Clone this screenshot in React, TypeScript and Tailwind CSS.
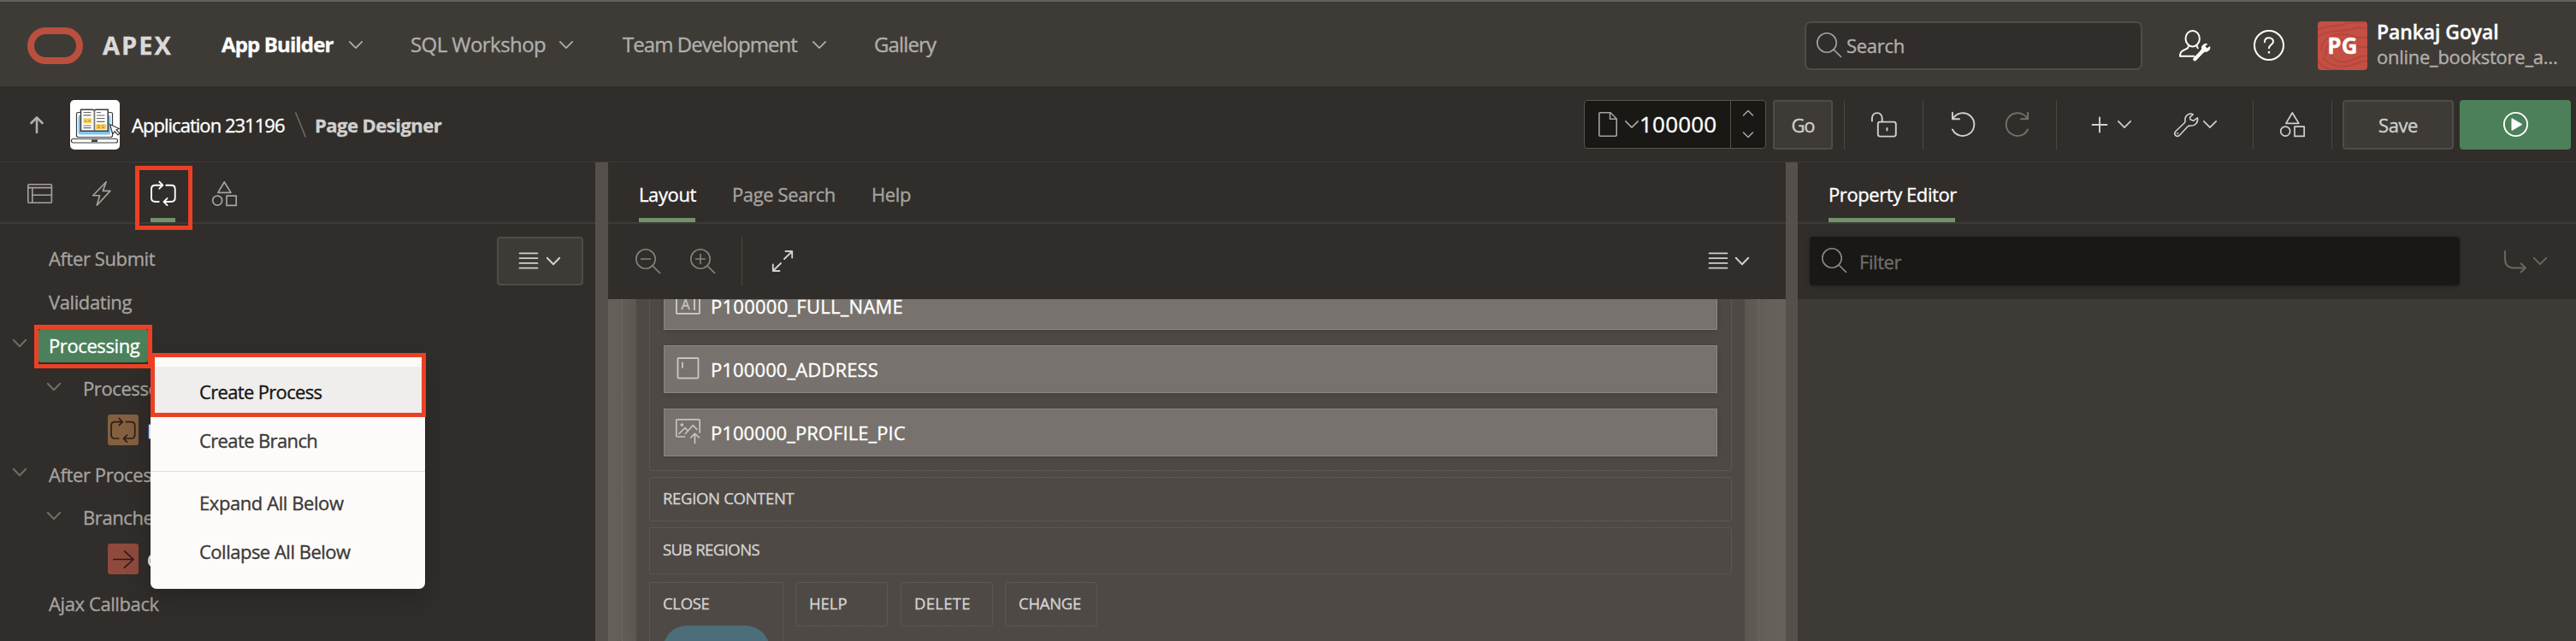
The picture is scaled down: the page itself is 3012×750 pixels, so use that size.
import React from "react";

type SvgProps = { className?: string; w: number; h: number; sw?: number; children: React.ReactNode };

function Svg({ className = "", w, h, sw = 1.6, children }: SvgProps) {
  return (
    <svg
      className={`block shrink-0 overflow-visible ${className}`}
      width={w}
      height={h}
      viewBox={`0 0 ${w} ${h}`}
      fill="none"
      stroke="currentColor"
      strokeWidth={sw}
      strokeLinecap="round"
      strokeLinejoin="round"
    >
      {children}
    </svg>
  );
}

const Chevron = ({ className = "", sw = 1.7 }: { className?: string; sw?: number }) => (
  <Svg w={16} h={9} sw={sw} className={className}>
    <path d="M.8 .8 8 8.2 15.2 .8" />
  </Svg>
);

const Lens = ({ className = "", sign = "" }: { className?: string; sign?: string }) => (
  <Svg w={29} h={29} className={className}>
    <circle cx="12" cy="12" r="11.2" />
    <path d="M20 20 28.5 28.4" />
    {sign !== "" && <path d="M6.5 12h11" />}
    {sign === "+" && <path d="M12 6.5v11" />}
  </Svg>
);

const Lines = () => (
  <Svg w={22} h={20} sw={1.7}>
    <path d="M.5 1.3h21M.5 7.1h21M.5 12.9h21M.5 18.7h21" />
  </Svg>
);

const Cycle = ({ className = "", sw = 1.9 }: { className?: string; sw?: number }) => (
  <Svg w={30} h={29} sw={sw} className={className}>
    <path d="M9.7 24H5.5Q1 24 1 19.5V9.2Q1 4.7 5.5 4.7H14.3M10.3.7l4 4-4 4" />
    <path d="M18.3 4.7h5.9q4.5 0 4.5 4.5v10.3q0 4.5-4.5 4.5H15.7M19.5 20.1l-4 4 4 4" />
  </Svg>
);

const Shapes = ({ className = "" }: { className?: string }) => (
  <Svg w={29} h={29} className={className} sw={1.7}>
    <path d="M14.3 1 21.9 13.4H6.9Z" />
    <circle cx="6.2" cy="22.6" r="5.5" />
    <rect x="17" y="17.2" width="11.2" height="11.2" />
  </Svg>
);

const Sep = ({ className = "" }: { className?: string }) => (
  <div className={`h-[58px] w-px shrink-0 bg-[#4a4642] ${className}`} />
);

function Header() {
  return (
    <header className="flex h-[101px] shrink-0 items-center border-t-2 border-[#60625f] bg-[#3e3b36] pl-8 pt-[3px]">
      <Svg w={65} h={43} sw={8} className="text-[#bb4f3e]">
        <rect x="4" y="4" width="57" height="35" rx="17.5" />
      </Svg>
      <div className="ml-[23px] w-[139px] pb-[2px] text-[29px] font-bold leading-none tracking-[2px] text-[#dbdad8]">APEX</div>
      <nav className="flex items-center pb-[2px] text-[24px] leading-none text-[#b1afac]">
        <div className="flex w-[221px] items-center">
          <span className="w-[149px] font-bold tracking-[-0.86px] text-white">App Builder</span>
          <Chevron />
        </div>
        <div className="flex w-[248px] items-center">
          <span className="w-[174px] tracking-[-0.56px]">SQL Workshop</span>
          <Chevron />
        </div>
        <div className="flex w-[294px] items-center">
          <span className="w-[222px] tracking-[-0.94px]">Team Development</span>
          <Chevron />
        </div>
        <span className="tracking-[-0.86px]">Gallery</span>
      </nav>
      <div className="ml-auto flex h-[57px] w-[395px] items-center rounded-[7px] border-2 border-[#504c48] bg-[#312d2a] pb-px pl-3 text-[22px] leading-none tracking-[-0.3px] text-[#b1afac]">
        <Lens className="mr-[6px] text-[#a5a3a0]" />
        Search
      </div>
      <div className="ml-[43px] flex w-[87px] text-white">
        <Svg w={37} h={36} sw={2}>
          <ellipse cx="15.7" cy="10.2" rx="8.2" ry="9.2" />
          <path d="M11 18.2c-.2 3.2-1.4 3.6-4.2 4.8C2.4 24.600 1 26.500 1 30.800H17.500M20.600 18.200c0 1.600.500 2.400 1.200 3" />
          <path d="M18.300 34.200 28.300 23.700" strokeWidth="4.200" />
          <path d="M32.500 16.500c-3.500-.8-6.800 2.200-5.800 6l-1.500 1.700 2.600 2.600 1.900-1.600c3.700.9 7-2.200 6-5.700l-3 2.500-2.700-2.700Z" fill="currentColor" strokeWidth="1" />
        </Svg>
      </div>
      <div className="w-[75px] text-white">
        <Svg w={36} h={36} sw={2}>
          <circle cx="18" cy="18" r="17" />
          <path d="M13 14.200c0-3 2-4.900 5-4.900s5 1.900 5 4.500c0 3.300-5 3.700-5 7.400" />
          <path d="M18 25.900v.5" strokeWidth="2.400" />
        </Svg>
      </div>
      <div className="relative flex h-[57px] w-[58px] items-center justify-center overflow-hidden rounded-[4px] bg-[#c44f43]">
        <svg className="absolute inset-0" width="58" height="57" viewBox="0 0 58 57" fill="none" stroke="#b5473c" strokeWidth="2">
          <path d="M0 10C12 3 22 7 32 3s18 0 26-3M0 18C14 9 30 12 40 9s12 0 18-2M4 34C4 22 16 15 28 15s20 6 30 4M10 40C6 26 20 20 30 22s16 10 28 8M14 36c2 10 14 14 24 10s14-6 20-6M6 42c8 12 24 12 34 9s12-6 18-4M0 46c8 12 20 11 30 11" />
        </svg>
        <span className="relative text-[26px] font-bold leading-none tracking-[0.2px] text-white">PG</span>
      </div>
      <div className="ml-[11px] w-[233px] pb-[2px]">
        <div className="text-[23px] font-semibold leading-[29px] tracking-[-0.1px] text-white">Pankaj Goyal</div>
        <div className="text-[22px] leading-[29px] tracking-[-0.27px] text-[#b1afac]">online_bookstore_a…</div>
      </div>
    </header>
  );
}

function AppIcon() {
  return (
    <div className="h-[58px] w-[58px] shrink-0 overflow-hidden rounded-[5px] bg-white">
      <svg width="58" height="58" viewBox="0 0 58 58" fill="none" stroke="#3a3a3a" strokeWidth="1.200">
        <path d="M12 14.500H9.500Q7.500 14.500 7.500 16.500V41.500Q7.500 43.500 9.500 43.500H47.500Q49.500 43.500 49.500 41.500V16.500Q49.500 14.500 47.500 14.500H45" />
        <path d="M12 18H11Q9.500 18 9.500 20V38Q9.500 40.500 12 40.500H45Q47.300 40.500 47.300 38V20Q47.300 18 45 18Z" fill="#7fc4ea" stroke="none" />
        <path d="M12.500 11.200H26.500Q28.400 11.500 28.400 13Q28.400 11.500 30 11.200H44.200V36.300H12.500Z" fill="#fff" strokeWidth="1.500" />
        <path d="M28.400 12V36" strokeWidth="1.800" stroke="#777" />
        <path d="M15.500 14.500h9M15.500 17.800h9M15.500 30h9M15.500 32.600h9M31 14.500h5M31 18h9.500M31 21.500h9.500M31 25.300h9.500" stroke="#666" />
        <path d="M15.300 21.200h10v6h-10zM30 28.200h12.300v6H30z" fill="#f0cd5a" stroke="none" />
        <path d="M17 24.800h2.500M21 24.200h3M32 30.200h3M37 30.200h3M32 32.500h3M37 32.500h3" stroke="#a58b35" strokeWidth="1" />
        <rect x="1.500" y="45.500" width="54" height="4.500" rx="2" />
        <path d="M25 47.700h7" strokeWidth="2.400" />
        <path d="M46.500 28.500 49.800 39.800 52 36.800 56 41 58 39 54 35 57.300 33.500Z" fill="#fff" />
      </svg>
    </div>
  );
}

function Toolbar() {
  return (
    <div className="flex h-[89px] shrink-0 items-center border-b border-[#3e3a37] bg-[#312d2a] pl-[35px] pr-[6px] pt-px text-[22px] leading-none">
      <Svg w={16} h={20} sw={2.600} className="text-[#b1afac]">
        <path d="M8 19V1.500M1.500 8 8 1.500 14.500 8" />
      </Svg>
      <div className="ml-[31px] flex items-center">
        <AppIcon />
        <span className="ml-[14px] w-[191px] tracking-[-0.97px] text-white">Application 231196</span>
        <Svg w={13} h={28} className="text-[#6f6c68]">
          <path d="M.8 0 12.200 28" />
        </Svg>
        <span className="ml-[10px] font-bold tracking-[-0.53px] text-[#d1d0ce]">Page Designer</span>
      </div>
      <div className="ml-auto flex h-[57px] w-[213px] items-center rounded-[4px] border border-[#57534f] bg-[#191815]">
        <div className="flex w-[170px] items-center pb-px pl-4 text-[#a5a3a0]">
          <Svg w={22} h={29} className="mr-[9px]">
            <path d="M.8 2V27Q.8 28.200 2 28.200H20Q21.200 28.200 21.200 27V8L14 .8H2Q.8 .8 .8 2ZM13.500 1V8.200H21" />
          </Svg>
          <Chevron />
          <span className="ml-px pb-px text-[26px] tracking-[0.2px] text-white">100000</span>
        </div>
        <div className="flex h-full w-[41px] flex-col items-center justify-center gap-[20px] border-l border-[#57534f] pb-[2px] text-[#a5a3a0]">
          <Svg w={12} h={6}>
            <path d="M.5 6 6 .5 11.500 6" />
          </Svg>
          <Svg w={12} h={6}>
            <path d="M.5 0 6 5.500 11.500 0" />
          </Svg>
        </div>
      </div>
      <div className="ml-[8px] flex h-[58px] w-[70px] items-center justify-center rounded-[3px] border-2 border-[#504c48] bg-[#3e3b36] tracking-[-1.2px] text-[#d1d0ce]">Go</div>
      <Sep className="ml-[13px]" />
      <Svg w={30} h={29} className="ml-[31px] text-[#d1d0ce]" sw={1.900}>
        <path d="M.9 10.500V7a5.900 5.900 0 0 1 11.800 0V11.500" />
        <rect x="7.800" y="11.600" width="21" height="17" rx="2.500" />
        <path d="M18.400 19v2.500" />
      </Svg>
      <Sep className="ml-[30px]" />
      <Svg w={27} h={29} className="ml-[33px] text-[#d1d0ce]" sw={1.900}>
        <path d="M.9 .8V8.200H9M1.500 7.600A13.400 13.400 0 1 1 .9 20.500" />
      </Svg>
      <Svg w={27} h={29} className="ml-[36px] text-[#74716d]" sw={1.900}>
        <path d="M26.100 .8V8.200H18M25.500 7.600A13.400 13.400 0 1 0 26.100 20.500" />
      </Svg>
      <Sep className="ml-[32px]" />
      <div className="ml-[41px] flex items-center text-[#d1d0ce]">
        <Svg w={18} h={18} sw={1.900}>
          <path d="M9 .5v17M.5 9h17" />
        </Svg>
        <Chevron className="ml-[12px]" />
        <Svg w={28} h={28} className="ml-[50px]">
          <path d="M22.300 2C17.500-.5 12 3.500 13 9.500Q13 11 12 12L2 21.500C-1.200 25 3 29.500 6.500 26.200L16 16Q17.200 15 19 15.200C24.500 15.800 28.500 11 27.500 5.800L22.500 9.300 19 7.800 18.600 5.200Z" />
          <path d="M4.200 24v.1" strokeWidth="2" />
        </Svg>
        <Chevron className="ml-[6px]" />
      </div>
      <Sep className="ml-[42px]" />
      <Shapes className="ml-[31px] text-[#d1d0ce]" />
      <Sep className="ml-[31px]" />
      <div className="ml-[12px] flex h-[58px] w-[130px] items-center justify-center rounded-[4px] border-2 border-[#504c48] bg-[#3e3b36] tracking-[-0.43px] text-[#d1d0ce]">Save</div>
      <div className="ml-[7px] flex h-[58px] w-[130px] items-center justify-center rounded-[4px] bg-[#4b805a] pb-px text-white">
        <Svg w={29} h={29} sw={1.900}>
          <circle cx="14.500" cy="14.500" r="13.600" />
          <path d="M10 8v13.500L21.500 14.700Z" fill="currentColor" strokeWidth="1" />
        </Svg>
      </div>
    </div>
  );
}

const Divider = ({ className = "" }: { className?: string }) => <div className={`shrink-0 bg-[#55504b] ${className}`} />;

const Tab = ({ children, active = false, className = "" }: { children: React.ReactNode; active?: boolean; className?: string }) => (
  <div className={`flex h-[70px] flex-col justify-end ${active ? "text-white" : "text-[#a5a3a0]"} ${className}`}>
    <div className="flex h-[65px] items-center pt-[8px]">{children}</div>
    <div className={`h-[5px] w-full ${active ? "bg-[#729369]" : ""}`} />
  </div>
);

type Row = { text: string; height: string; indent: string; chevron?: boolean; icon?: "process" | "branch" };

const rows: Row[] = [
  { text: "After Submit", height: "h-[52px]", indent: "w-[57px]" },
  { text: "Validating", height: "h-[50px]", indent: "w-[57px]" },
  { text: "Processing", height: "h-[51px]", indent: "w-[57px]", chevron: true },
  { text: "Processes", height: "h-[50px]", indent: "w-[97px]", chevron: true },
  { text: "P", height: "h-[50px]", indent: "w-[126px]", icon: "process" },
  { text: "After Processing", height: "h-[51px]", indent: "w-[57px]", chevron: true },
  { text: "Branches", height: "h-[50px]", indent: "w-[97px]", chevron: true },
  { text: "G", height: "h-[50px]", indent: "w-[126px]", icon: "branch" },
  { text: "Ajax Callback", height: "h-[51px]", indent: "w-[57px]" },
];

function TreePanel() {
  return (
    <section className="relative flex w-[696px] shrink-0 flex-col bg-[#312d2a]">
      <div className="flex h-[72px] shrink-0 border-b-2 border-[#3e3a37] pl-8 text-[#a5a3a0]">
        <Tab className="w-[76px]">
          <Svg w={29} h={23}>
            <rect x=".8" y=".8" width="27.600" height="21.400" rx="1" />
            <path d="M1 4.600h27.500M5.800 4.600v17.500M5.800 13.200h22.500" />
          </Svg>
        </Tab>
        <Tab className="w-[68px]">
          <Svg w={22} h={29}>
            <path d="M16.200 .8.700 16.700H8.600L5.300 28.200 20.900 11.400H12.300Z" />
          </Svg>
        </Tab>
        <Tab active className="w-[29px]">
          <Cycle />
        </Tab>
        <Tab className="ml-[43px] w-[29px]">
          <Shapes />
        </Tab>
      </div>
      <div className="flex min-h-0 grow justify-between overflow-hidden">
        <div className="w-[500px] shrink-0 pt-[13px] text-[22px] leading-none tracking-[-0.4px] text-[#a5a3a0]">
          {rows.map((r) => (
            <div key={r.text} className={`flex items-center ${r.height}`}>
              <div className={`flex shrink-0 ${r.indent} ${r.icon ? "" : "justify-end"}`}>
                {r.chevron && <Chevron className="mr-[26px] -mt-[2px] text-[#716e6a]" sw={2} />}
              </div>
              {r.icon === "process" && (
                <div className="mr-[10px] flex h-9 w-9 items-center justify-center rounded-[3px] bg-[#84603f] text-[#2a2019]">
                  <Cycle sw={1.700} />
                </div>
              )}
              {r.icon === "branch" && (
                <div className="mr-[10px] flex h-9 w-9 items-center justify-center rounded-[3px] bg-[#8f4a3d] text-[#2c1a17]">
                  <Svg w={25} h={21} sw={1.700}>
                    <path d="M.8 10.500H24M13.500 .8 24 10.500 13.500 20.200" />
                  </Svg>
                </div>
              )}
              {r.text === "Processing" ? (
                <span className="-ml-3 mt-[4px] flex h-[39px] w-[128px] items-center rounded-[3px] bg-[#4b805a] pb-[2px] pl-3 text-white">{r.text}</span>
              ) : (
                <span className={r.icon ? "pt-[2px] text-white" : "pt-[2px]"}>{r.text}</span>
              )}
            </div>
          ))}
        </div>
        <div className="mr-[14px] mt-[15px] flex h-[57px] w-[101px] items-center justify-center gap-[10px] rounded-[4px] border-2 border-[#504c48] bg-[#3e3b36] pb-px pr-[2px] text-[#d1d0ce]">
          <Lines />
          <Chevron sw={2} />
        </div>
      </div>

      {/* Context menu */}
      <div className="absolute left-[176px] top-[224px] flex h-[275px] w-[321px] flex-col rounded-[7px] bg-[#fcfbfa] pt-[15px] text-[22px] leading-none text-[#3b3937] shadow-[0_10px_30px_rgba(0,0,0,0.22)]">
        <div className="flex h-[57px] items-center bg-[#efeeec] pl-[57px] tracking-[-0.66px] text-[#161513]">Create Process</div>
        <div className="flex h-[57px] items-center pl-[57px] tracking-[-0.62px]">Create Branch</div>
        <div className="my-[8px] h-px bg-[#e0dfdd]" />
        <div className="flex h-[57px] items-center pb-px pl-[57px] tracking-[-0.42px]">Expand All Below</div>
        <div className="flex h-[57px] items-center pb-px pl-[57px] tracking-[-0.5px]">Collapse All Below</div>
      </div>

      {/* Highlight frames */}
      <div className="absolute left-[158px] top-[4px] h-[75px] w-[67px] border-[5px] border-[#ec4025]" />
      <div className="absolute left-[40px] top-[190px] h-[51px] w-[138px] border-[5px] border-[#ec4025]" />
      <div className="absolute left-[176px] top-[223px] h-[75px] w-[322px] border-[5px] border-[#ec4025]" />
    </section>
  );
}

const Item = ({ icon, children, className = "" }: { icon: React.ReactNode; children: React.ReactNode; className?: string }) => (
  <div className="flex h-[56px] w-[1232px] items-center border border-[#8a8581] bg-[#77726d] pl-[13px] text-[22px] leading-none text-white shadow-[0_2px_6px_rgba(0,0,0,0.12)]">
    <div className="flex w-[41px] text-[#c6c3c0]">{icon}</div>
    <span className={`pb-px ${className}`}>{children}</span>
  </div>
);

function Canvas() {
  const slot = "rounded-[3px] border border-dotted border-[#6b6661] pl-[15px] pb-[2px] flex text-[18.5px] leading-none text-[#d5d3d1]";
  return (
    <div className="flex h-[400px] shrink-0 justify-center overflow-hidden bg-[#66615b]">
      <div className="ml-[-15px] w-[1330px] shrink-0 border-x border-dotted border-[#7b7671] px-4">
        <div className="-mt-[30px] h-[460px] w-[1296px] bg-[#4e4945] px-[15px] shadow-[0_0_36px_rgba(0,0,0,0.22)]">
          <div className="mb-[7px] flex h-[231px] flex-col gap-[18px] rounded-[3px] border border-dotted border-[#6b6661] pl-[16px] pt-[9px]">
            <Item
              className="tracking-[0.25px]"
              icon={
                <div className="-mt-[4px] flex h-[23px] w-[29px] items-center justify-center gap-[4px] rounded-[2px] border-2 border-current text-[16px] leading-none">
                  A<span className="h-[14px] w-[2px] bg-current" />
                </div>
              }
            >
              P100000_FULL_NAME
            </Item>
            <Item
              className="tracking-[0.12px]"
              icon={
                <Svg w={28} h={26} sw={1.900} className="-mt-[3px]">
                  <rect x="2.500" y="1" width="24" height="23.500" rx="1" />
                  <path d="M8 6.500v5.500" />
                </Svg>
              }
            >
              P100000_ADDRESS
            </Item>
            <Item
              className="tracking-[0.07px]"
              icon={
                <Svg w={29} h={29} sw={1.700} className="-mt-[3px]">
                  <path d="M28.200 16V2Q28.200 .8 27 .8H2Q.8 .8 .8 2V19.800Q.8 21 2 21H10.500M4 17.300 11 10.500 13.500 13.300M11.500 17.300 20.200 7.700 25 12.500M22.500 28.500V17.500M17.700 22 22.500 17.300 27.500 22" />
                  <circle cx="7.300" cy="7" r="1" fill="currentColor" />
                </Svg>
              }
            >
              P100000_PROFILE_PIC
            </Item>
          </div>
          <div className={`mb-[7px] h-[52px] items-center tracking-[-0.33px] ${slot}`}>REGION CONTENT</div>
          <div className={`mb-[9px] h-[55px] items-center tracking-[-0.55px] ${slot}`}>SUB REGIONS</div>
          <div className="flex items-start">
            <div className={`mr-[14px] h-[120px] w-[157px] flex-col tracking-[-0.34px] ${slot}`}>
              <span className="flex h-[50px] shrink-0 items-center pb-[2px]">CLOSE</span>
              <div className="h-[60px] w-[125px] rounded-[28px] bg-[#4c6d7a]" />
            </div>
            <div className={`mr-[15px] h-[52px] w-[108px] items-center tracking-[-0.03px] ${slot}`}>HELP</div>
            <div className={`mr-[14px] h-[52px] w-[108px] items-center tracking-[0.3px] ${slot}`}>DELETE</div>
            <div className={`h-[52px] w-[108px] items-center tracking-[-0.27px] ${slot}`}>CHANGE</div>
          </div>
        </div>
      </div>
    </div>
  );
}

function CenterPanel() {
  return (
    <section className="flex w-[1377px] shrink-0 flex-col bg-[#312d2a]">
      <div className="flex h-[72px] shrink-0 border-b-2 border-[#3e3a37] pl-[36px] text-[22px] leading-none tracking-[-0.38px]">
        <Tab active className="w-[66px]">
          <span>Layout</span>
        </Tab>
        <Tab className="ml-[43px] w-[120px]">Page Search</Tab>
        <Tab className="ml-[43px] w-[50px]">Help</Tab>
      </div>
      <div className="flex h-[88px] shrink-0 items-center pb-[1px] pl-[32px] pr-[43px]">
        <Lens sign="-" className="text-[#86837f]" />
        <Lens sign="+" className="ml-[35px] text-[#86837f]" />
        <Sep className="ml-[31px]" />
        <Svg w={24} h={25} sw={1.900} className="ml-[35px] text-[#d1d0ce]">
          <path d="M14 10 23 1.200M15.500 1H23.200V8.500M10 15 1 23.800M.8 16.500V24H8.500" />
        </Svg>
        <div className="ml-auto flex items-center gap-[9px] pb-px text-[#d1d0ce]">
          <Lines />
          <Chevron sw={2} />
        </div>
      </div>
      <Canvas />
    </section>
  );
}

function PropertyPanel() {
  return (
    <section className="flex grow flex-col bg-[#3e3b36] text-[22px] leading-none">
      <div className="flex h-[72px] shrink-0 border-b-2 border-[#3e3a37] bg-[#312d2a] pl-[36px] tracking-[-0.42px]">
        <Tab active className="w-[148px]">
          <span>Property Editor</span>
        </Tab>
      </div>
      <div className="flex h-[88px] shrink-0 items-center bg-[#312d2a] pl-[14px] pr-[34px]">
        <div className="-mt-px flex h-[57px] w-[760px] items-center rounded-[4px] bg-[#191815] pl-[14px] tracking-[-0.43px] text-[#716e6a] shadow-[0_1px_4px_rgba(0,0,0,0.3)]">
          <Lens className="mr-[15px] -mt-[2px] text-[#8b8885]" />
          Filter
        </div>
        <div className="ml-auto flex items-center gap-[8px] pb-px text-[#6b6864]">
          <Svg w={26} h={26} sw={1.900}>
            <path d="M1 .8V10Q1 20.500 11.500 20.500H25M19.500 15.300 25 20.500 19.500 25.500" />
          </Svg>
          <Chevron sw={1.900} />
        </div>
      </div>
    </section>
  );
}

export default function App() {
  return (
    <div className="flex h-[750px] w-[3012px] flex-col overflow-hidden whitespace-nowrap bg-[#312d2a] font-['Open_Sans','Noto_Sans',sans-serif] [-webkit-text-stroke:0.35px]">
      <Header />
      <Toolbar />
      <main className="flex h-[560px] shrink-0">
        <TreePanel />
        <Divider className="w-[15px]" />
        <CenterPanel />
        <Divider className="w-[14px]" />
        <PropertyPanel />
      </main>
    </div>
  );
}
